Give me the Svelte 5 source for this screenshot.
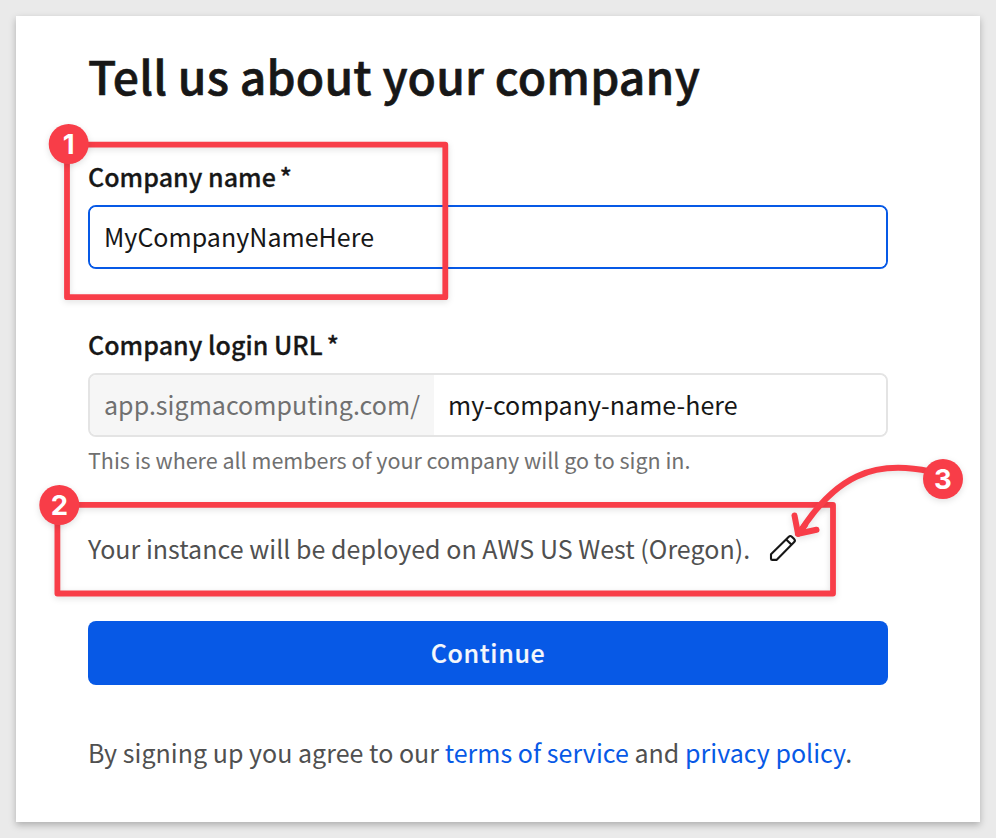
<script>
  let company = $state('MyCompanyNameHere');
  let slug = $state('my-company-name-here');
  const badges = [
    { n: 1, x: 68.7, y: 144 },
    { n: 2, x: 59.3, y: 505 },
    { n: 3, x: 943, y: 479 }
  ];
</script>

<div class="page">
  <main class="card">
    <h1>Tell us about your company</h1>

    <label for="company"><span>Company name</span> <span class="star">*</span></label>
    <div class="field active">
      <input id="company" class="company" bind:value={company} />
    </div>

    <label for="slug" class="second"><span>Company login URL</span> <span class="star">*</span></label>
    <div class="field">
      <span class="prefix"><span>app.sigmacomputing.com/</span></span>
      <input id="slug" class="slug" bind:value={slug} />
    </div>
    <p class="hint"><span>This is where all members of your company will go to sign in.</span></p>

    <div class="instance">
      <span>Your instance will be deployed on AWS US West (Oregon).</span>
      <svg class="pencil" width="32" height="32" viewBox="0 0 32 32" fill="none" stroke="#171717" stroke-width="2.1" stroke-linejoin="round">
        <path d="M4 22.3 21.8 4.7Q23.3 3.3 24.8 4.7L27.2 7.1Q28.6 8.6 27.2 10.1L9.5 27.9H5.2Q4 27.9 4 26.7ZM19.2 7.4 24.6 12.7" />
      </svg>
    </div>

    <button type="button"><span>Continue</span></button>

    <p class="legal">
      <span>By signing up you agree to our <a href="#terms">terms of service</a> and <a href="#privacy">privacy policy</a>.</span>
    </p>
  </main>

  <svg class="notes" width="996" height="838" viewBox="0 0 996 838" fill="none">
    <g class="shade" stroke="#f83d48" stroke-width="5.8" stroke-linejoin="round">
      <rect x="67" y="144.7" width="378.3" height="152.5" />
      <rect x="57.4" y="504.9" width="775.6" height="88.6" />
    </g>
    <g class="shade" stroke="#f83d48" stroke-width="6" stroke-linecap="round" stroke-linejoin="round">
      <path d="M930 471.5C873 459 835 477 800 532" />
      <path d="M794.5 515.5 798 533.8 816.5 529.8" />
      <path d="M798 533.8 805 525" />
    </g>
    {#each badges as b}
      <circle class="shade" cx={b.x} cy={b.y} r="20" fill="#f83d48" />
      <text x={b.x} y={b.y + 9.7} text-anchor="middle">{b.n}</text>
    {/each}
  </svg>
</div>

<style>
  :global(body) { margin: 0; background: #eaeaea; }
  .page {
    position: relative;
    width: 996px;
    height: 838px;
    box-sizing: border-box;
    padding: 16px;
    overflow: hidden;
    background: #eaeaea;
    font-family: "Noto Sans CJK JP", "Noto Sans", sans-serif;
    font-size: 25px;
    letter-spacing: 0.03px;
    color: #171717;
  }
  .card {
    height: 806px;
    box-sizing: border-box;
    padding: 28px 92px 0 72px;
    background: #fff;
    box-shadow: 0 3px 7px rgba(0, 0, 0, 0.26);
    display: flex;
    flex-direction: column;
  }
  h1 {
    margin: 0;
    font-size: 46.3px;
    line-height: 62px;
    font-weight: 500;
    letter-spacing: 0.18px;
    white-space: nowrap;
    -webkit-text-stroke: 0.6px #171717;
  }
  label {
    display: flex;
    gap: 5px;
    margin-top: 52px;
    line-height: 36px;
    font-weight: 500;
    letter-spacing: 0.04px;
    -webkit-text-stroke: 0.3px #171717;
  }
  .star { margin-left: -1px; }
  label.second { margin-top: 57px; }
  .field {
    display: flex;
    height: 64px;
    box-sizing: border-box;
    border: 2px solid #e4e4e4;
    border-radius: 8px;
    overflow: hidden;
    flex: none;
  }
  label + .field { margin-top: 11px; }
  .field.active { border-color: #0759e6; }
  input {
    flex: 1;
    min-width: 0;
    border: 0;
    outline: 0;
    padding: 0 14px 2px;
    background: #fff;
    color: inherit;
    font: inherit;
    letter-spacing: inherit;
  }
  .prefix {
    width: 344px;
    box-sizing: border-box;
    padding-left: 14px;
    line-height: 58px;
    background: #f6f6f6;
    color: #707070;
    white-space: nowrap;
  }
  .hint { margin: 7px 0 0; font-size: 21.5px; line-height: 32px; letter-spacing: -0.01px; color: #707070; white-space: nowrap; }
  .instance { display: flex; align-items: center; height: 36px; margin-top: 54px; color: #505050; white-space: nowrap; }
  .pencil { margin-left: 17px; }
  button {
    height: 64px;
    margin-top: 55px;
    border: 0;
    padding: 0 0 2px;
    border-radius: 8px;
    background: #0759e6;
    color: #f5f7fb;
    font: inherit;
    font-weight: 500;
    letter-spacing: 0.65px;
    -webkit-text-stroke: 0.2px #f5f7fb;
    flex: none;
  }
  .legal { margin: 49px 0 0; line-height: 36px; letter-spacing: 0.025px; color: #505050; white-space: nowrap; }
  a { color: #0759e6; text-decoration: none; }
  .notes { position: absolute; left: 0; top: 0; pointer-events: none; letter-spacing: 0; }
  .shade { filter: drop-shadow(0 2px 3px rgba(0, 0, 0, 0.12)); }
  text { fill: #fff; font: 700 27.5px Inter, sans-serif; }
</style>
